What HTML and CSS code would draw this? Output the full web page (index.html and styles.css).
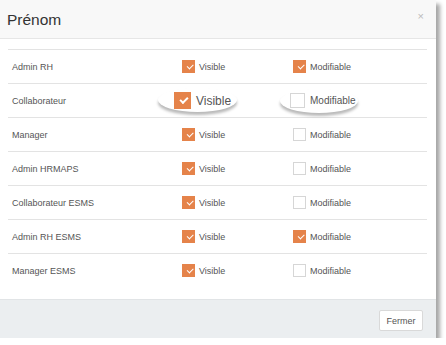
FILE: index.html
```html
<!DOCTYPE html>
<html lang="fr">
<head>
<meta charset="utf-8">
<title>Prénom</title>
<link rel="stylesheet" href="styles.css">
</head>
<body>
<div class="modal">
  <div class="modal-header">
    <h4 class="modal-title">Prénom</h4>
    <span class="close">×</span>
  </div>
  <div class="modal-body">
    <div class="row">
      <div class="role">Admin RH</div>
      <label class="opt"><span class="cb on"></span><span class="lbl">Visible</span></label>
      <label class="opt"><span class="cb on"></span><span class="lbl">Modifiable</span></label>
    </div>
    <div class="row">
      <div class="role">Collaborateur</div>
      <label class="opt big big-v"><span class="oval oval-v"></span><span class="cb on"></span><span class="lbl">Visible</span></label>
      <label class="opt big big-m"><span class="oval oval-m"></span><span class="cb"></span><span class="lbl">Modifiable</span></label>
    </div>
    <div class="row">
      <div class="role">Manager</div>
      <label class="opt"><span class="cb on"></span><span class="lbl">Visible</span></label>
      <label class="opt"><span class="cb"></span><span class="lbl">Modifiable</span></label>
    </div>
    <div class="row">
      <div class="role">Admin HRMAPS</div>
      <label class="opt"><span class="cb on"></span><span class="lbl">Visible</span></label>
      <label class="opt"><span class="cb"></span><span class="lbl">Modifiable</span></label>
    </div>
    <div class="row">
      <div class="role">Collaborateur ESMS</div>
      <label class="opt"><span class="cb on"></span><span class="lbl">Visible</span></label>
      <label class="opt"><span class="cb"></span><span class="lbl">Modifiable</span></label>
    </div>
    <div class="row">
      <div class="role">Admin RH ESMS</div>
      <label class="opt"><span class="cb on"></span><span class="lbl">Visible</span></label>
      <label class="opt"><span class="cb on"></span><span class="lbl">Modifiable</span></label>
    </div>
    <div class="row">
      <div class="role">Manager ESMS</div>
      <label class="opt"><span class="cb on"></span><span class="lbl">Visible</span></label>
      <label class="opt"><span class="cb"></span><span class="lbl">Modifiable</span></label>
    </div>
  </div>
  <div class="modal-footer">
    <button class="btn">Fermer</button>
  </div>
</div>
</body>
</html>
```
FILE: styles.css
```css
html, body {
  margin: 0;
  padding: 0;
  background: #ffffff;
}
body {
  font-family: "Liberation Sans", Arial, sans-serif;
  color: #555;
}
.modal {
  width: 436px;
  height: 338px;
  background: #fff;
  box-shadow: 4px 4px 4px rgba(0, 0, 0, 0.35);
  display: flex;
  flex-direction: column;
}
.modal-header {
  height: 39px;
  box-sizing: border-box;
  background: #f8f8f8;
  border-bottom: 1px solid #e6e6e6;
  display: flex;
  align-items: center;
  justify-content: space-between;
  padding: 2px 12px 0 7px;
}
.modal-title {
  margin: 0;
  font-size: 15.5px;
  font-weight: normal;
  color: #333;
}
.close {
  font-size: 11px;
  color: #bbb;
  margin-top: -8px;
}
.modal-body {
  flex: 1;
  padding: 10px 9px 0 8px;
}
.row {
  height: 34px;
  box-sizing: border-box;
  border-top: 1px solid #e3e3e3;
  display: grid;
  grid-template-columns: 174px 111px 1fr;
  align-items: center;
  font-size: 9px;
}
.role {
  padding-left: 4px;
}
.opt {
  display: flex;
  align-items: center;
  gap: 4px;
  position: relative;
}
.cb {
  width: 13px;
  height: 13px;
  box-sizing: border-box;
  border: 1px solid #d6d6d6;
  background: #fff;
  position: relative;
  z-index: 1;
}
.lbl {
  position: relative;
  z-index: 1;
}
.cb.on {
  background: #e5834a;
  border-color: #e5834a;
}
.cb.on::after {
  content: "";
  position: absolute;
  left: 3.5px;
  top: 2.5px;
  width: 5px;
  height: 2.5px;
  border-left: 1.5px solid #fff;
  border-bottom: 1.5px solid #fff;
  transform: rotate(-45deg);
}
.opt.big {
  gap: 5px;
}
.big-v {
  margin-left: -8px;
  font-size: 12px;
}
.big-v .cb {
  width: 17px;
  height: 17px;
}
.big-v .cb.on::after {
  left: 4.5px;
  top: 4px;
  width: 6px;
  height: 3px;
  border-width: 2px;
}
.big-m {
  margin-left: -3px;
  font-size: 10px;
}
.big-m .cb {
  width: 15px;
  height: 15px;
}
.oval {
  position: absolute;
  top: -4px;
  height: 24px;
  border-radius: 50%;
  background: #fff;
  box-shadow: 0 3px 3px rgba(0, 0, 0, 0.28);
  z-index: 0;
}
.oval-v {
  left: -16px;
  width: 79px;
}
.oval-m {
  left: -10px;
  width: 78px;
  top: -4.5px;
}
.modal-footer {
  height: 39px;
  box-sizing: border-box;
  background: #ebeef0;
  border-top: 1px solid #e1e4e6;
  display: flex;
  align-items: center;
  justify-content: flex-end;
  padding: 3px 13px 0 0;
}
.btn {
  font-family: "Liberation Sans", Arial, sans-serif;
  font-size: 9px;
  color: #555;
  background: #fff;
  border: 1px solid #d9d9d9;
  border-radius: 2px;
  width: 44px;
  height: 21px;
  padding: 0;
}
```
